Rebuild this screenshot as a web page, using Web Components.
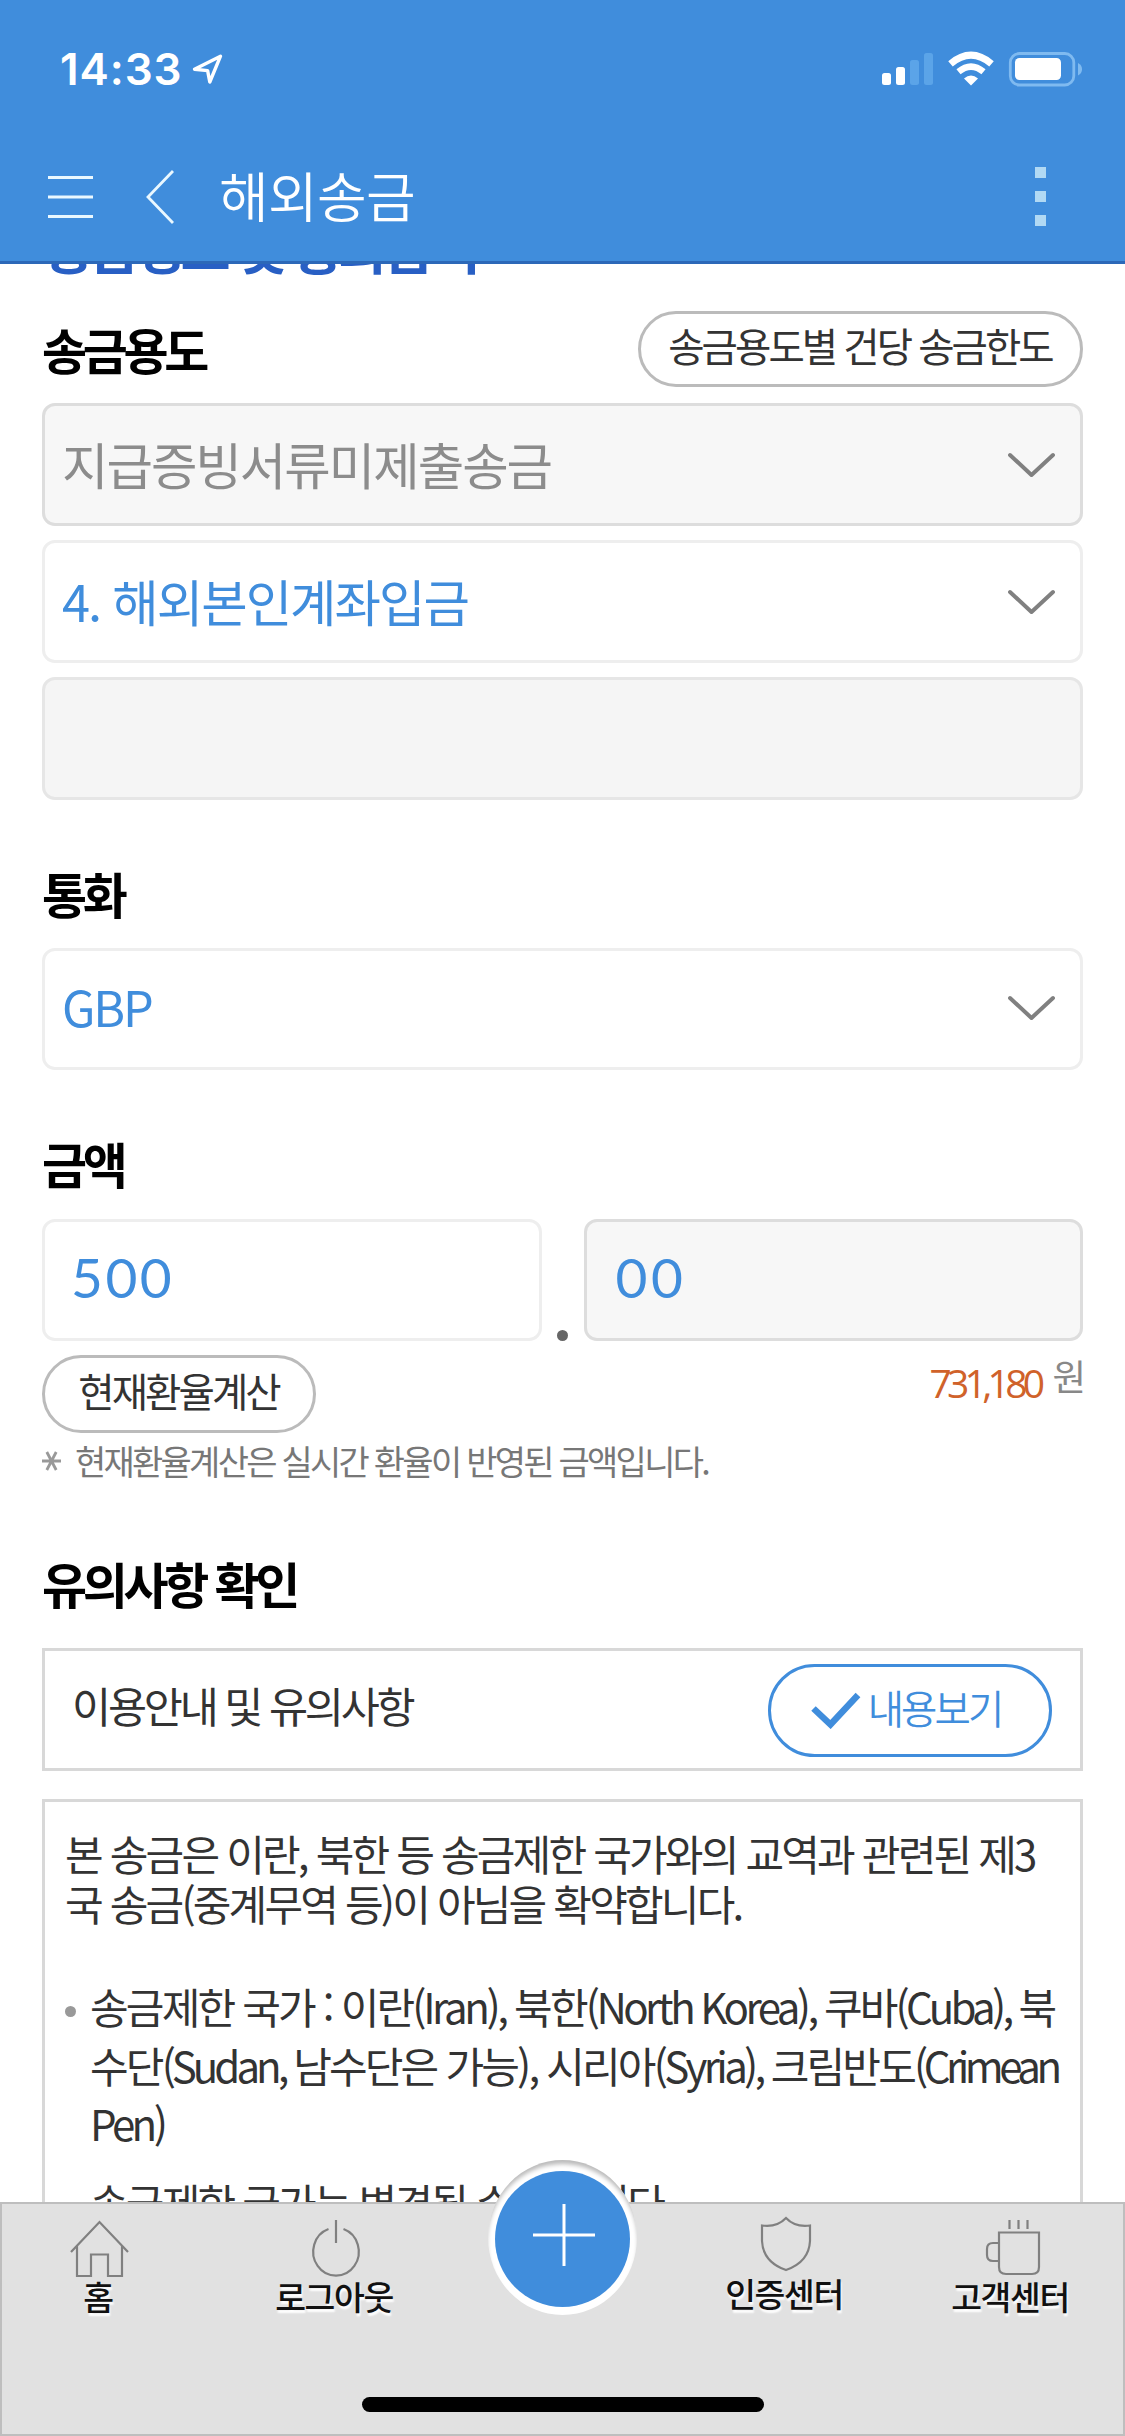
<!DOCTYPE html>
<html lang="ko">
<head>
<meta charset="utf-8">
<title>해외송금</title>
<style>
  html, body { margin: 0; padding: 0; background: #fff; }
  body { width: 1125px; height: 2436px; overflow: hidden; font-family: "Noto Sans CJK KR", "Noto Sans", sans-serif; }
</style>
</head>
<body>
<remit-app></remit-app>
<script>
const define = (name, css, html) => {
  const template = document.createElement('template');
  template.innerHTML = `<style>*{box-sizing:border-box}${css}</style>${html}`;
  customElements.define(name, class extends HTMLElement {
    constructor() {
      super();
      this.attachShadow({ mode: 'open' }).appendChild(template.content.cloneNode(true));
    }
  });
};

define('status-bar', `
  :host { display: flex; justify-content: space-between; height: 132px; padding: 45px 42px 0 60px; color: #fff; }
  .left { display: flex; gap: 10px; height: 48px; align-items: center; }
  .time { font: 580 44px/48px Inter, sans-serif; letter-spacing: .9px; white-space: nowrap; }
  svg { display: block; }
  .right { height: 48px; display: flex; }
`, `
  <div class="left">
    <span class="time">14:33</span>
    <svg width="32" height="32" viewBox="0 0 32 32" fill="none" stroke="#fff" stroke-width="3.4" stroke-linejoin="round"><path d="M2.5 16.2 28.5 3.2 17.8 29 15.6 17.6Z"/></svg>
  </div>
  <div class="right">
    <svg width="201" height="48" viewBox="0 0 201 48">
      <g fill="#fff"><rect x="0" y="28" width="9" height="12" rx="2.5"/><rect x="14" y="22" width="9" height="18" rx="2.5"/></g>
      <g fill="#5ba4e8"><rect x="28" y="15" width="9" height="25" rx="2.5"/><rect x="42" y="8" width="9" height="32" rx="2.5"/></g>
      <g fill="none" stroke="#fff"><path d="M68.5 18.8Q89 1.500 109.500 18.800" stroke-width="7"/><path d="M76.500 26.800Q89 16.500 101.500 26.800" stroke-width="6.500"/></g>
      <path d="M82 33.500Q89 27.500 96 33.500L89 40.500Z" fill="#fff"/>
      <rect x="128.300" y="8.500" width="63.500" height="31.500" rx="9" fill="none" stroke="#7fbaf0" stroke-width="2.800"/>
      <rect x="133" y="13" width="46" height="22" rx="4.500" fill="#fff"/>
      <path d="M196 18Q200 20 200 24.300T196 30.500Z" fill="#7fbaf0"/>
    </svg>
  </div>
`);

define('nav-bar', `
  :host { display: flex; align-items: center; height: 132px; padding: 0 79px 0 48px; border-bottom: 3px solid #2c68b8; color: #fff; }
  svg { display: block; }
  .menu { margin-right: 52px; }
  h1 { flex: 1; margin: 0 0 3px 45px; font-size: 54px; line-height: 60px; font-weight: 350; letter-spacing: -.7px; white-space: nowrap; }
  .more { display: grid; gap: 13px; }
  .more i { width: 11px; height: 11px; background: #b1d9f4; }
`, `
  <svg class="menu" width="46" height="46" viewBox="0 0 46 46" stroke="#eaf8ff" stroke-width="3"><path d="M0 3.500H45M0 23H45M0 42.500H45"/></svg>
  <svg width="28" height="56" viewBox="0 0 28 56" fill="none" stroke="#eaf8ff" stroke-width="2.800"><path d="M27 2 2 28 27 54"/></svg>
  <h1><slot></slot></h1>
  <div class="more"><i></i><i></i><i></i></div>
`);

define('section-title', `
  :host { display: block; height: 60px; font-size: 49px; line-height: 60px; font-weight: 700; letter-spacing: -4.300px; color: #000; white-space: nowrap; }
`, `<slot></slot>`);

define('pill-button', `
  :host { display: flex; align-items: center; justify-content: center; box-sizing: border-box; border: 3px solid #bbb; border-radius: 40px; color: #333; font-size: 39.500px; line-height: 50px; letter-spacing: -2.950px; font-weight: 400; white-space: nowrap; padding: 0 1px 8px 0; }
  :host([kind="primary"]) { border-color: #408ddc; border-radius: 47px; color: #408ddc; font-weight: 350; padding: 0 8px 7px 0; }
`, `<slot></slot>`);

define('form-field', `
  :host { display: flex; align-items: center; justify-content: space-between; box-sizing: border-box; height: 123px; border: 3px solid #eee; border-radius: 13px; background: #fff; padding: 0 24px 4px 17px; color: #408ddc; font-size: 50.500px; line-height: 60px; letter-spacing: -2px; font-weight: 400; white-space: nowrap; }
  :host([state="off"]) { background: #f7f7f7; border-color: #ddd; color: #8c8c8c; }
  :host([state="empty"]) { background: #f5f5f5; border-color: #e6e6e6; }
  :host([kind="number"]) { height: 122px; padding: 0 26px 6px 26px; color: #408ddc; font-family: Lato, sans-serif; font-size: 55px; letter-spacing: 2.500px; font-weight: 400; }
  :host([kind="number"][state="off"]) { padding-left: 29px; letter-spacing: 3.600px; }
  svg { display: none; margin-top: 4px; }
  :host([arrow]) svg { display: block; }
`, `
  <slot></slot>
  <svg width="50" height="28" viewBox="0 0 50 28" fill="none" stroke="#808080" stroke-width="4" stroke-linecap="round" stroke-linejoin="round"><path d="M4 4 25.500 24 47 4"/></svg>
`);

define('amount-row', `
  :host { display: flex; justify-content: space-between; align-items: flex-end; }
  ::slotted(form-field) { width: 499.500px; }
  i { width: 11px; height: 11px; border-radius: 50%; background: #666; }
`, `<slot name="whole"></slot><i></i><slot name="cents"></slot>`);

define('rate-row', `
  :host { display: flex; justify-content: space-between; align-items: flex-start; height: 78px; }
  .sum { display: flex; align-items: flex-start; white-space: nowrap; }
  .won { font: 400 39px/50px "Open Sans", sans-serif; letter-spacing: -4.700px; color: #d0622a; margin-top: 3px; }
  .unit { font-size: 36.500px; line-height: 44px; font-weight: 400; color: #888; margin: -1px -3px 0 12px; }
`, `<slot></slot><div class="sum"><span class="won"><slot name="won"></slot></span><span class="unit"><slot name="unit"></slot></span></div>`);

define('foot-note', `
  :host { display: flex; align-items: center; gap: 13px; height: 40px; font-size: 34px; line-height: 40px; letter-spacing: -2.750px; color: #777; font-weight: 400; white-space: nowrap; }
  svg { display: block; }
`, `<svg width="20" height="22" viewBox="0 0 20 22" stroke="#999" stroke-width="2.800"><path d="M0 11H19M4.800 2 14.200 20M14.200 2 4.800 20"/></svg><span><slot></slot></span>`);

define('notice-row', `
  :host { display: flex; align-items: center; justify-content: space-between; box-sizing: border-box; height: 123px; border: 3px solid #d8d8d8; padding: 2px 28px 0 27px; font-size: 42.500px; line-height: 50px; letter-spacing: -3.200px; color: #333; font-weight: 400; white-space: nowrap; }
  span { margin-bottom: 11px; }
`, `<span><slot></slot></span><slot name="action"></slot>`);

define('terms-box', `
  :host { display: block; box-sizing: border-box; border: 3px solid #d8d8d8; border-bottom: 0; height: 500px; padding: 26px 22px 0 20px; font-size: 42px; line-height: 50px; letter-spacing: -2.820px; color: #333; font-weight: 400; white-space: nowrap; }
  .list { margin-top: 49px; display: flex; flex-direction: column; gap: 20px; line-height: 58.700px; }
`, `<slot></slot><div class="list"><slot name="item"></slot></div>`);

define('bullet-item', `
  :host { display: flex; gap: 14px; }
  i { flex: none; width: 11px; height: 11px; margin-top: 29px; border-radius: 50%; background: #999; }
`, `<i></i><div><slot></slot></div>`);

define('check-icon', `
  :host { display: block; margin: 5px 7px 0 0; }
  svg { display: block; }
`, `<svg width="50" height="38" viewBox="0 0 50 38" fill="none" stroke="#408ddc" stroke-width="6.500"><path d="M2.500 17.500 19.500 33.500 47 4"/></svg>`);

define('tab-item', `
  :host { display: flex; flex-direction: column; align-items: center; font-size: 33.500px; line-height: 40px; letter-spacing: -1.400px; font-weight: 500; color: #111; text-shadow: 1px 3px 2px #fff; white-space: nowrap; }
  span { margin: -3px 2px 0 0; }
`, `<slot name="icon"></slot><span><slot></slot></span>`);

define('tab-bar', `
  :host { display: block; position: relative; box-sizing: border-box; height: 234px; background: #e1e1e1; border: 2px solid #bebebe; }
  .tabs { display: grid; grid-template-columns: 194px 278px 180px 262px 190px; padding-top: 11px; }
  svg { display: block; fill: none; stroke: #808080; stroke-width: 2.200; }
  tab-item.up { margin-top: -3px; }
  .fab { position: absolute; left: 486px; top: -44px; width: 149px; height: 155px; border-radius: 50%; background: #fff; box-shadow: inset 0 5px 4px -1px #bbb; display: grid; place-items: center; }
  .fab div { width: 135px; height: 136px; margin-top: 3px; border-radius: 50%; background: #408ddc; display: grid; place-items: center; }
  .fab svg { stroke: #fff; stroke-width: 3; margin: -9px 0 0 3px; }
  .home { position: absolute; left: 360px; bottom: 22px; width: 402px; height: 15px; border-radius: 8px; background: #000; }
`, `
  <div class="tabs">
    <tab-item><svg slot="icon" width="60" height="64" viewBox="0 0 60 64"><path d="M2 37 30.500 7 59 37M8 31V61H22V39.500H39V61H53V31"/></svg>홈</tab-item>
    <tab-item><svg slot="icon" width="60" height="64" viewBox="0 0 60 64"><path d="M23.500 14A22.800 24 0 1 0 38.500 14M31 5V28"/></svg>로그아웃</tab-item>
    <span></span>
    <tab-item class="up"><svg slot="icon" width="60" height="64" viewBox="0 0 60 64"><path d="M31 6Q22 15.500 7 13.500V29Q8 50 31 58Q54 50 55 29V13.500Q40 15.500 31 6Z"/></svg>인증센터</tab-item>
    <tab-item><svg slot="icon" width="60" height="64" viewBox="0 0 60 64"><path d="M18 17.500H58V52Q58 59 51 59H25Q18 59 18 52ZM18 28H12Q6 28 6 34V40Q6 46 12 46H18M28.500 5V14M37.500 5V14M46.500 5V14"/></svg>고객센터</tab-item>
  </div>
  <div class="fab"><div><svg width="64" height="64" viewBox="0 0 64 64"><path d="M1 32H63M32 1V63"/></svg></div></div>
  <div class="home"></div>
`);

define('remit-app', `
  :host { display: flex; flex-direction: column; width: 1125px; height: 2436px; overflow: hidden; background: #fff; }
  header { flex: none; background: #408ddc; }
  main { flex: 1; min-height: 0; overflow: hidden; padding: 0 42px; display: flex; flex-direction: column; }
  main > * { flex: none; }
  .step { font-size: 54.500px; letter-spacing: -4.600px; color: #285fc4; margin: -48px 0 35px 2px; }
  .row { display: flex; align-items: center; justify-content: space-between; height: 76px; }
  .limit { width: 445px; height: 76px; }
  .fields { display: grid; gap: 14px; margin-top: 16px; }
  .cur { margin-top: 63px; }
  .box { margin-top: 25px; height: 122px; padding-bottom: 6px; font-size: 48.500px; letter-spacing: -2.200px; }
  .amt { margin-top: 63px; }
  .amounts { margin-top: 26px; }
  .rate { margin-top: 14px; }
  .calc { width: 274px; height: 78px; }
  foot-note { margin-top: 8px; }
  .care { margin-top: 72px; }
  notice-row { margin-top: 35px; }
  .view { width: 284px; height: 93px; }
  terms-box { margin-top: 28px; }
  .t1 { letter-spacing: -3.350px; }
  .t2 { letter-spacing: -3.550px; }
  .t3 { letter-spacing: -3.700px; }
  .t4 { letter-spacing: -4px; }
  .t5 { letter-spacing: -4.500px; }
  tab-bar { flex: none; }
`, `
  <header><status-bar></status-bar><nav-bar>해외송금</nav-bar></header>
  <main>
    <section-title class="step">송금정보 및 통화금액</section-title>
    <div class="row"><section-title>송금용도</section-title><pill-button class="limit">송금용도별 건당 송금한도</pill-button></div>
    <div class="fields">
      <form-field state="off" arrow>지급증빙서류미제출송금</form-field>
      <form-field arrow>4. 해외본인계좌입금</form-field>
      <form-field state="empty"></form-field>
    </div>
    <section-title class="cur">통화</section-title>
    <form-field class="box" arrow>GBP</form-field>
    <section-title class="amt">금액</section-title>
    <amount-row class="amounts">
      <form-field slot="whole" kind="number">500</form-field>
      <form-field slot="cents" kind="number" state="off">00</form-field>
    </amount-row>
    <rate-row class="rate"><pill-button class="calc">현재환율계산</pill-button><span slot="won">731,180</span><span slot="unit">원</span></rate-row>
    <foot-note>현재환율계산은 실시간 환율이 반영된 금액입니다.</foot-note>
    <section-title class="care">유의사항 확인</section-title>
    <notice-row>이용안내 및 유의사항<pill-button slot="action" class="view" kind="primary"><check-icon></check-icon>내용보기</pill-button></notice-row>
    <terms-box>본 송금은 이란, 북한 등 송금제한 국가와의 교역과 관련된 제3<br>국 송금(중계무역 등)이 아님을 확약합니다.
      <bullet-item slot="item">송금제한 국가 : 이란<span class="t1">(Iran), </span>북한<span class="t2">(North Korea), </span>쿠바<span class="t3">(Cuba), </span>북<br>수단<span class="t4">(Sudan, </span>남수단은 가능), 시리아<span class="t3">(Syria), </span>크림반도<span class="t5">(Crimean</span><br><span class="t2">Pen)</span></bullet-item>
      <bullet-item slot="item">송금제한 국가는 변경될 수 있습니다.</bullet-item>
    </terms-box>
  </main>
  <tab-bar></tab-bar>
`);
</script>
</body>
</html>
